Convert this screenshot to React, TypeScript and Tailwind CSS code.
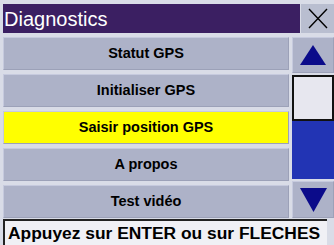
import React from "react";

const items = ["Statut GPS", "Initialiser GPS", "Saisir position GPS", "A propos", "Test vidéo"];

export default function App() {
  return (
    <div className="w-[334px] h-[245px] overflow-hidden bg-[#d9dce7] flex flex-col pl-[3px] pt-[4px] font-['Liberation_Sans',Arial,sans-serif]">
      <div className="flex h-[29px] gap-[1px]">
        <div className="flex-1 bg-[#3b1f62] text-white text-[20px] leading-[30px] pl-[1px]">Diagnostics</div>
        <div className="w-[33px] bg-[#b9bed0] flex items-center justify-center">
          <svg width="20" height="21" viewBox="0 0 20 21">
            <path d="M1 1 L19 20 M19 1 L1 20" stroke="#000" strokeWidth="1.4" fill="none" />
          </svg>
        </div>
      </div>

      <div className="flex mt-[4px] gap-[3px] h-[181px]">
        <div className="w-[286px] flex flex-col gap-[4px]">
          {items.map((t, i) => (
            <div
              key={t}
              className={
                "h-[33px] flex items-center justify-center text-[14.5px] font-bold text-black border border-t-[#c6cade] border-l-[#c6cade] border-b-[#9ca1b8] border-r-[#9ca1b8] " +
                (i === 2 ? "bg-[#ffff00]" : "bg-[#adb2c8]")
              }
            >
              {t}
            </div>
          ))}
        </div>

        <div className="flex-1 flex flex-col">
          <div className="h-[36px] bg-[#adb2c8] border border-t-[#c6cade] border-l-[#c6cade] border-b-[#9ca1b8] border-r-[#9ca1b8] flex items-center justify-center">
            <svg width="26" height="20" viewBox="0 0 26 20">
              <path d="M13 0 L26 20 L0 20 Z" fill="#0b0b8a" />
            </svg>
          </div>
          <div className="flex-1 flex flex-col pt-[2px] pb-[2px]">
            <div className="h-[46px] bg-[#e7e7ef] border-2 border-[#111]" />
            <div className="flex-1 bg-[#2234b4]" />
          </div>
          <div className="h-[37px] bg-[#adb2c8] border border-t-[#c6cade] border-l-[#c6cade] border-b-[#9ca1b8] border-r-[#9ca1b8] flex items-center justify-center">
            <svg width="27" height="24" viewBox="0 0 27 24">
              <path d="M0 0 L27 0 L13.5 24 Z" fill="#0b0b8a" />
            </svg>
          </div>
        </div>
      </div>

      <div className="mt-[1px] w-[324px] h-[27px] bg-[#f0f0f5] border-t-2 border-l-2 border-[#222] text-[17.4px] font-bold text-black leading-[25px] pl-[3px] whitespace-nowrap overflow-hidden">
        Appuyez sur ENTER ou sur FLECHES
      </div>
    </div>
  );
}
